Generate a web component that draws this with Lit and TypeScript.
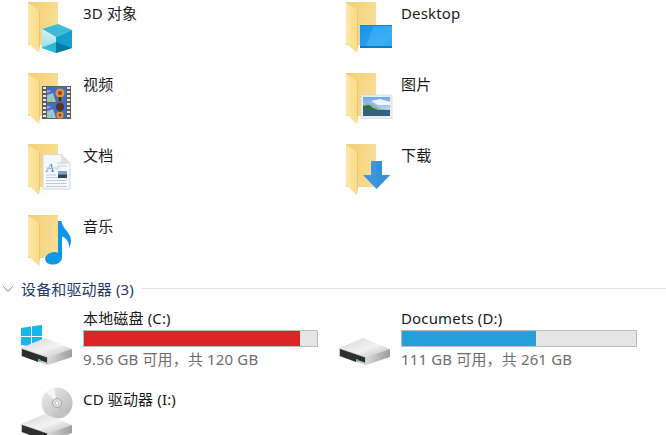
import { LitElement, html, css, svg } from "lit";
import { customElement } from "lit/decorators.js";

const defs = svg`
  <defs>
    <linearGradient id="back" x1="0" y1="0" x2="1" y2="0.2">
      <stop offset="0" stop-color="#f2cd74"/><stop offset="1" stop-color="#f8dd92"/>
    </linearGradient>
    <linearGradient id="front" x1="0" y1="0" x2="1" y2="0">
      <stop offset="0" stop-color="#fde9a6"/><stop offset="1" stop-color="#fbdc8b"/>
    </linearGradient>
    <linearGradient id="top" x1="0" y1="0" x2="1" y2="1">
      <stop offset="0" stop-color="#d6d6d6"/><stop offset=".55" stop-color="#f2f2f2"/><stop offset="1" stop-color="#bcbcbc"/>
    </linearGradient>
    <linearGradient id="side" x1="0" y1="0" x2="1" y2="0">
      <stop offset="0" stop-color="#d8d8d8"/><stop offset="1" stop-color="#9e9e9e"/>
    </linearGradient>
    <linearGradient id="disc" x1="0" y1="0" x2="1" y2="1">
      <stop offset="0" stop-color="#eeeeee"/><stop offset="0.5" stop-color="#d2d2d2"/><stop offset="1" stop-color="#b0b0b0"/>
    </linearGradient>
    <linearGradient id="desk" x1="0" y1="0" x2="1" y2="1">
      <stop offset="0" stop-color="#1a8fee"/><stop offset="1" stop-color="#2cb0f6"/>
    </linearGradient>
    <linearGradient id="sky" x1="0" y1="0" x2="0" y2="1">
      <stop offset="0" stop-color="#6aa6e6"/><stop offset="1" stop-color="#e4eff6"/>
    </linearGradient>
    <linearGradient id="cubeL" x1="0" y1="0" x2="0" y2="1">
      <stop offset="0" stop-color="#d2f2f5"/><stop offset=".6" stop-color="#a9e6ee"/><stop offset="1" stop-color="#34bdd8"/>
    </linearGradient>
  </defs>`;

const folder = svg`
  <path d="M8 2H38V45H8Z" fill="url(#back)"/>
  <path d="M8 3L19 10V53L8 43Z" fill="url(#front)"/>
  <path d="M19 10V53L20 45V10Z" fill="#eec56a"/>`;

const cube = svg`
  <path d="M22 29L38 24L52 30L36 37Z" fill="#3db9da"/>
  <path d="M22 29L36 37V53L22 48Z" fill="url(#cubeL)"/>
  <path d="M36 37L52 30V48L36 53Z" fill="#119fd0"/>
  <path d="M36 42L52 48L36 53Z" fill="#0b78a4"/>
  <path d="M36 42L22 48L36 53Z" fill="#2cb8d6"/>`;

const film = svg`
  <rect x="22" y="15" width="29" height="33" fill="#5e5e5e"/>
  <path d="M24.5 16V47M48.5 16V47" stroke="#e6e6e6" stroke-width="3" stroke-dasharray="2 2"/>
  <rect x="27" y="16" width="19" height="15" fill="#3b6fc9"/>
  <rect x="27" y="32" width="19" height="15" fill="#3b6fc9"/>
  <path d="M27 24L33 22L36 31H27Z" fill="#9bc4c8"/>
  <path d="M27 40L33 38L36 47H27Z" fill="#9bc4c8"/>
  <path d="M27 19L32 20L27 22Z" fill="#d38ad0"/>
  <path d="M27 35L32 36L27 38Z" fill="#d38ad0"/>
  <circle cx="40" cy="22" r="4.5" fill="#e0962c"/><circle cx="40" cy="22" r="2" fill="#a82f24"/>
  <path d="M38.5 26H41.5L41 30H39Z" fill="#4a2c20"/>
  <circle cx="40" cy="36" r="4" fill="#4f3630"/><path d="M39 40H41V44H39Z" fill="#1f1f2c"/>
  <circle cx="40" cy="44" r="3.5" fill="#e0962c"/><circle cx="40" cy="44" r="1.5" fill="#a82f24"/>`;

const doc = svg`
  <path d="M23 12.5H41L50 21V47H23Z" fill="#f6f8fb" stroke="#d5d8dd"/>
  <path d="M41 12.5V21H50Z" fill="#dfe3e8"/>
  <text x="26" y="30" font-family="Liberation Serif, serif" font-style="italic" font-size="13" fill="#2f82d0">A</text>
  <path d="M26 26H40M26 33H36M26 35.5H47M26 38.5H47M26 41.5H47M26 44.5H47" stroke="#bcd0e4" stroke-width="1"/>
  <path d="M37 21H47M37 24H47" stroke="#bcd0e4" stroke-width="1"/>
  <rect x="38" y="29" width="9" height="7" fill="#7fa6c4"/>
  <rect x="38" y="32.5" width="9" height="3.5" fill="#2f4a5c"/>`;

const note = svg`
  <path d="M38 8H41.5C42 14 47 17 49.5 22C51.5 26 51.5 31 49 35C49.5 30 47 25 42 23.5V44C42 49 37 52 31.5 51.5C25.5 51 23.5 46 26.5 42.5C29.5 39 35 38 38 40Z" fill="#0e97e8"/>`;

const desktop = svg`
  <rect x="22" y="25" width="32" height="23" fill="url(#desk)"/>
  <path d="M36 25H54V38L44 46H28Z" fill="#4ab4f5" opacity=".55"/>
  <rect x="22" y="46" width="32" height="2" fill="#1179bf"/>
  <rect x="22" y="25" width="32" height="1" fill="#0f86cf"/>`;

const picture = svg`
  <rect x="23" y="24" width="31" height="23.5" fill="#e9eef3" stroke="#cfd6dc" stroke-width=".6"/>
  <rect x="25" y="26" width="27" height="19" fill="url(#sky)"/>
  <path d="M33 30L42 28L52 31V34H40Z" fill="#f2f6fa"/>
  <path d="M25 34L30 32L36 34L43 38L52 39V45H25Z" fill="#8bb2a4"/>
  <path d="M25 35L31 34L35 37L40 39H25Z" fill="#2f6a52"/>
  <rect x="25" y="39" width="27" height="6" fill="#35607f"/>`;

const arrow = svg`
  <path d="M33 19H44V33H52L38.5 47L25 33H33Z" fill="#3d97e0"/>
  <path d="M38.5 19H44V33H52L38.5 47Z" fill="#2f8ad6" opacity=".5"/>`;

const drive = (dy: number) => svg`
  <g transform="translate(0 ${dy})">
    <path d="M1 43L25 33L52 44L28 52Z" fill="url(#top)"/>
    <path d="M1 43L28 52V60L1 51Z" fill="#c4c4c4"/>
    <path d="M2 44L27 52.5V57.5L18 54.5V57L2 51Z" fill="#2f2f2f"/>
    <path d="M28 52L52 44V52L28 60Z" fill="url(#side)"/>
    <rect x="18" y="54" width="2" height="2" fill="#37c765"/>
  </g>`;

const windows = svg`
  <path d="M1 23L11 21.5V31H1ZM12 21.3L22 20V31H12ZM1 32H11V41.5L1 40ZM12 32H22V43L12 41.6Z" fill="#19b6ee"/>`;

const disc = svg`
  <circle cx="37" cy="16" r="15.5" fill="url(#disc)"/>
  <path d="M37 16L26 5A15.5 15.5 0 0 1 34 .8Z" fill="#f4f4f4"/>
  <path d="M37 16L48 27A15.5 15.5 0 0 1 40 31.2Z" fill="#c2c2c2"/>
  <circle cx="37" cy="16" r="4.5" fill="#e0e0e0" stroke="#a8a8a8"/>
  <circle cx="37" cy="16" r="1.8" fill="#fff" stroke="#a0a0a0" stroke-width=".5"/>`;

const icon = (content: unknown) => html`<svg class="icon" viewBox="0 0 60 60" width="60" height="60">${defs}${content}</svg>`;

const folders = [
  ["3D 对象", cube],
  ["Desktop", desktop],
  ["视频", film],
  ["图片", picture],
  ["文档", doc],
  ["下载", arrow],
  ["音乐", note],
] as const;

@customElement("app-root")
export class AppRoot extends LitElement {
  static styles = css`
    :host {
      display: block;
      width: 666px;
      height: 435px;
      overflow: hidden;
      background: #fff;
      font-family: "Noto Sans", "Noto Sans CJK SC", sans-serif;
      font-size: 15px;
      letter-spacing: 0.15px;
      color: #1a1a1a;
    }
    .grid {
      display: grid;
      grid-template-columns: 318px 348px;
      grid-template-rows: 71px 71px 71px 65px;
    }
    .tile {
      display: flex;
      gap: 3px;
      padding-left: 20px;
    }
    .icon { flex: none; display: block; overflow: hidden; }
    .label { line-height: 20px; padding-top: 3px; white-space: nowrap; }
    .header {
      display: flex;
      align-items: center;
      height: 21px;
      margin-bottom: 6px;
      color: #1f3a6b;
    }
    .chev { flex: none; margin: 0 7px 0 2px; }
    .header span { white-space: nowrap; }
    .rule { flex: 1; height: 1px; background: #e3e3e3; margin-left: 8px; }
    .drives {
      display: grid;
      grid-template-columns: 318px 348px;
      grid-template-rows: 82px 60px;
    }
    .info { width: 236px; padding-top: 3px; }
    .name { line-height: 20px; white-space: nowrap; }
    .bar {
      box-sizing: border-box;
      height: 17px;
      margin-top: 2px;
      border: 1px solid #bcbcbc;
      background: #e6e6e6;
      display: flex;
    }
    .fill { height: 100%; }
    .red { background: #da2626; }
    .blue { background: #26a0da; }
    .sub { line-height: 20px; margin-top: 2px; color: #6d6d6d; white-space: nowrap; }
    .cd { padding-top: 2px; }
  `;

  render() {
    return html`
      <div class="grid">
        ${folders.map(([name, art]) => html`
          <div class="tile">${icon(svg`${folder}${art}`)}<div class="label">${name}</div></div>`)}
      </div>
      <div class="header">
        <svg class="chev" width="12" height="8" viewBox="0 0 12 8"><path d="M1 1L6 6.5L11 1" fill="none" stroke="#8a8a8a"/></svg>
        <span>设备和驱动器 (3)</span>
        <div class="rule"></div>
      </div>
      <div class="drives">
        <div class="tile">
          ${icon(svg`${windows}${drive(0)}`)}
          <div class="info">
            <div class="name">本地磁盘 (C:)</div>
            <div class="bar"><div class="fill red" style="width:92.5%"></div></div>
            <div class="sub">9.56 GB 可用，共 120 GB</div>
          </div>
        </div>
        <div class="tile">
          ${icon(svg`${drive(0)}`)}
          <div class="info">
            <div class="name">Documets (D:)</div>
            <div class="bar"><div class="fill blue" style="width:57.4%"></div></div>
            <div class="sub">111 GB 可用，共 261 GB</div>
          </div>
        </div>
        <div class="tile">
          ${icon(svg`${disc}${drive(-6)}`)}
          <div class="info cd"><div class="name">CD 驱动器 (I:)</div></div>
        </div>
      </div>
    `;
  }
}
